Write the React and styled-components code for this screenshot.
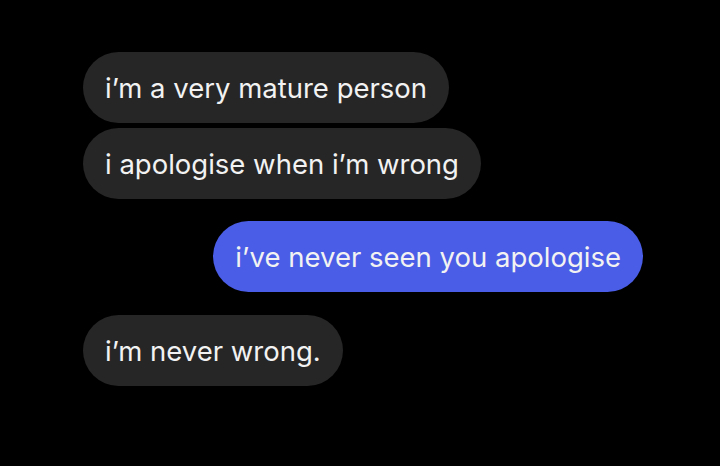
import React from 'react'
import styled, { createGlobalStyle } from 'styled-components'

const GlobalStyle = createGlobalStyle`
  html, body {
    margin: 0;
    padding: 0;
    background: #000;
  }
  body {
    font-family: Inter, "Liberation Sans", sans-serif;
  }
`

const messages = [
  { text: 'i’m a very mature person', mine: false, gap: 0 },
  { text: 'i apologise when i’m wrong', mine: false, gap: 5 },
  { text: 'i’ve never seen you apologise', mine: true, gap: 22 },
  { text: 'i’m never wrong.', mine: false, gap: 23 },
]

function App() {
  return (
    <>
      <GlobalStyle />
      <Screen>
        <Thread>
          {messages.map((m, i) => (
            <Bubble key={i} $mine={m.mine} $gap={m.gap}>
              {m.text}
            </Bubble>
          ))}
        </Thread>
      </Screen>
    </>
  )
}

export default App

const Screen = styled.div`
  width: 720px;
  height: 466px;
  background: #000;
  overflow: hidden;
`

const Thread = styled.div`
  display: flex;
  flex-direction: column;
  padding: 52px 77px 0 83px;
`

const Bubble = styled.div`
  align-self: ${(p) => (p.$mine ? 'flex-end' : 'flex-start')};
  margin-top: ${(p) => p.$gap}px;
  height: 71px;
  display: flex;
  align-items: center;
  padding: 0 22px;
  border-radius: 36px;
  background: ${(p) => (p.$mine ? '#4a5de6' : '#262626')};
  color: #f2f2f2;
  font-size: 27.5px;
  white-space: nowrap;
  box-sizing: border-box;
`
